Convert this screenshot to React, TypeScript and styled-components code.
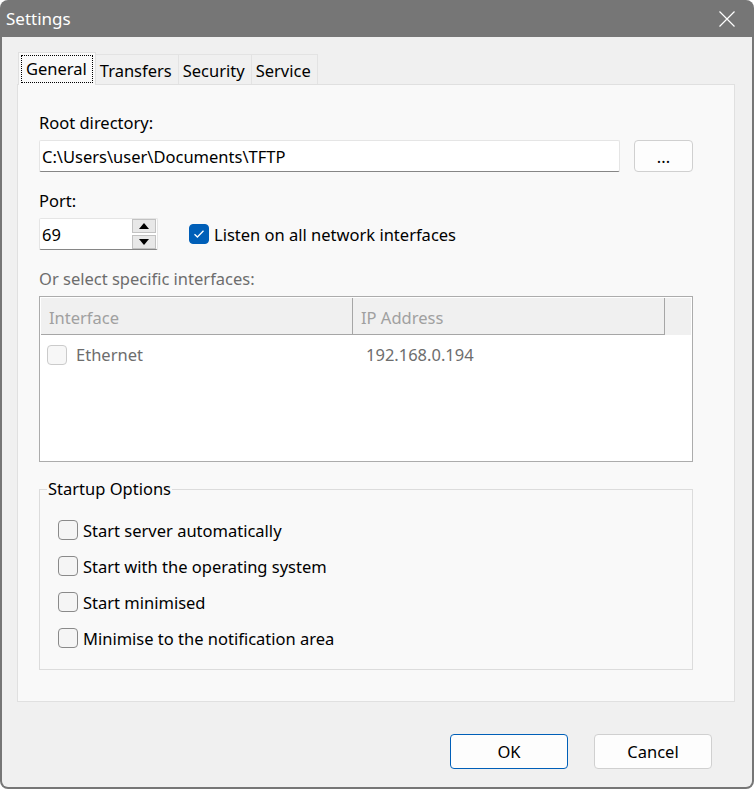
import React from "react";
import styled, { createGlobalStyle, css } from "styled-components";

const FONT = `"Noto Sans", "Open Sans", "DejaVu Sans", sans-serif`;
const SIZE = "16.5px";

const GlobalStyle = createGlobalStyle`
  html, body {
    margin: 0;
    padding: 0;
    background: #ffffff;
  }
  body {
    font-family: ${FONT};
    font-size: ${SIZE};
    color: #000;
  }
  * { box-sizing: border-box; }
`;

const Window = styled.div`
  width: 754px;
  height: 789px;
  background: #767676;
  border-radius: 8px;
  display: flex;
  flex-direction: column;
  overflow: hidden;
`;

const TitleBar = styled.div`
  height: 37px;
  flex: none;
  display: flex;
  align-items: center;
  justify-content: space-between;
  padding: 0 19px 0 6px;
  color: #ffffff;
  font-size: 17px;
  line-height: 24px;
`;

const Client = styled.div`
  flex: 1;
  margin: 0 2px 2px;
  background: #f0f0f0;
  border-radius: 0 0 6px 6px;
  padding: 15px 17px 0 15px;
  display: flex;
  flex-direction: column;
`;

const TabStrip = styled.div`
  height: 32px;
  display: flex;
  align-items: flex-end;
  padding-left: 1px;
`;

const Tab = styled.div<{ $active?: boolean }>`
  position: relative;
  height: 30px;
  padding: 2px 2px 0;
  margin-left: -1px;
  border: 1px solid #e3e3e3;
  border-bottom: none;
  background: #f0f0f0;
  display: flex;
  align-items: flex-start;
  &:first-child { margin-left: 0; }
  ${(p) =>
    p.$active &&
    css`
      height: 33px;
      margin-bottom: -1px;
      background: #f9f9f9;
      border-color: #e0e0e0;
      z-index: 1;
    `}
`;

const TabLabel = styled.span<{ $focused?: boolean }>`
  height: 28px;
  padding: ${(p) => (p.$focused ? "0 5px 0 4px" : "0 3px 0 1px")};
  line-height: 26px;
  border: 1px dotted ${(p) => (p.$focused ? "#000" : "transparent")};
  white-space: nowrap;
`;

const Panel = styled.div`
  height: 618px;
  border: 1px solid #e0e0e0;
  background: #f9f9f9;
  padding: 26px 0 0 21px;
  display: flex;
  flex-direction: column;
`;

const Content = styled.div`
  width: 654px;
  display: flex;
  flex-direction: column;
`;

const Label = styled.div<{ $muted?: boolean; $gap?: number }>`
  line-height: 24px;
  height: 24px;
  margin-top: ${(p) => p.$gap ?? 0}px;
  margin-bottom: 5px;
  color: ${(p) => (p.$muted ? "#6d6d6d" : "#000")};
  white-space: nowrap;
`;

const Row = styled.div<{ $gap: number }>`
  display: flex;
  align-items: center;
  gap: ${(p) => p.$gap}px;
`;

const TextBox = styled.div<{ $width: number }>`
  width: ${(p) => p.$width}px;
  height: 32px;
  background: #ffffff;
  border: 1px solid #e5e5e5;
  border-bottom-color: #868686;
  border-radius: 2px;
  display: flex;
  align-items: stretch;
`;

const TextValue = styled.div`
  flex: 1;
  padding: 1px 0 0 2px;
  line-height: 30px;
  white-space: nowrap;
`;

const PushButton = styled.button<{ $default?: boolean; $width: number; $height: number }>`
  width: ${(p) => p.$width}px;
  height: ${(p) => p.$height}px;
  font-family: ${FONT};
  font-size: ${SIZE};
  color: #000;
  background: #fdfdfd;
  border: 1px solid ${(p) => (p.$default ? "#005fb8" : "#d0d0d0")};
  border-radius: 4px;
  padding: 0;
  display: flex;
  align-items: center;
  justify-content: center;
`;

const SpinButtons = styled.div`
  width: 25px;
  display: flex;
  flex-direction: column;
  justify-content: center;
  gap: 2px;
`;

const SpinButton = styled.div`
  width: 24px;
  height: 14px;
  background: #e8e8e8;
  border: 1px solid #c2c2c2;
  display: flex;
  align-items: center;
  justify-content: center;
`;

const CheckBox = styled.span<{ $checked?: boolean; $disabled?: boolean }>`
  flex: none;
  width: 20px;
  height: 20px;
  border-radius: 4px;
  display: inline-flex;
  align-items: center;
  justify-content: center;
  ${(p) =>
    p.$checked
      ? css`
          background: #005fb8;
          border: 1px solid #005fb8;
        `
      : p.$disabled
      ? css`
          background: #f7f7f7;
          border: 1px solid #cbcbcb;
        `
      : css`
          background: #f5f5f5;
          border: 1px solid #8a8a8a;
        `}
`;

const CheckRow = styled.label<{ $height?: number }>`
  display: flex;
  align-items: center;
  gap: 5px;
  height: ${(p) => p.$height ?? 36}px;
  line-height: 24px;
  white-space: nowrap;
`;

const CheckText = styled.span`
  padding-top: 2px;
`;

const ListView = styled.div`
  height: 166px;
  border: 1px solid #acacac;
  background: #ffffff;
  padding: 1px;
  display: flex;
  flex-direction: column;
`;

const HeaderRow = styled.div`
  height: 37px;
  background: #f0f0f0;
  display: flex;
`;

const HeaderCell = styled.div`
  width: 312px;
  height: 37px;
  padding: 2px 0 0 8px;
  line-height: 36px;
  color: #a0a0a0;
  border-right: 1px solid #a6a6a6;
  border-bottom: 1px solid #a6a6a6;
  white-space: nowrap;
`;

const ListRow = styled.div`
  height: 38px;
  padding-top: 2px;
  display: flex;
  align-items: center;
  color: #6d6d6d;
  line-height: 24px;
`;

const ListCell = styled.div<{ $width?: number; $pad: number }>`
  width: ${(p) => (p.$width ? `${p.$width}px` : "auto")};
  padding-left: ${(p) => p.$pad}px;
  display: flex;
  align-items: center;
  gap: 9px;
  white-space: nowrap;
`;

const GroupBox = styled.fieldset`
  margin: 15px 0 0;
  padding: 11px 0 13px 18px;
  min-width: 0;
  border: 1px solid #dcdcdc;
`;

const Legend = styled.legend`
  margin-left: -11px;
  padding: 0 1px;
  line-height: 24px;
  white-space: nowrap;
`;

const ButtonBar = styled.div`
  display: flex;
  justify-content: flex-end;
  gap: 26px;
  padding: 32px 23px 0 0;
`;

const CloseIcon = () => (
  <svg width="16" height="16" viewBox="0 0 16 16" aria-hidden="true">
    <path d="M0.5 0.5 L15.5 15.5 M15.5 0.5 L0.5 15.5" stroke="#ffffff" strokeWidth="1.2" fill="none" />
  </svg>
);

const Arrow = ({ up }: { up?: boolean }) => (
  <svg width="10" height="6" viewBox="0 0 10 6" aria-hidden="true">
    <path d={up ? "M0 6 L5 0 L10 6 Z" : "M0 0 L5 6 L10 0 Z"} fill="#000" />
  </svg>
);

const Check = () => (
  <svg width="12" height="10" viewBox="0 0 12 10" aria-hidden="true">
    <path d="M1.5 5.2 L4.4 8 L10.5 1.8" stroke="#ffffff" strokeWidth="1.3" fill="none" />
  </svg>
);

const tabs = ["General", "Transfers", "Security", "Service"];

const startup = [
  "Start server automatically",
  "Start with the operating system",
  "Start minimised",
  "Minimise to the notification area",
];

export default function App() {
  return (
    <>
      <GlobalStyle />
      <Window>
        <TitleBar>
          <span>Settings</span>
          <CloseIcon />
        </TitleBar>
        <Client>
          <TabStrip>
            {tabs.map((t, i) => (
              <Tab key={t} $active={i === 0}>
                <TabLabel $focused={i === 0}>{t}</TabLabel>
              </Tab>
            ))}
          </TabStrip>
          <Panel>
            <Content>
              <Label>Root directory:</Label>
              <Row $gap={14}>
                <TextBox $width={581}>
                  <TextValue>C:\Users\user\Documents\TFTP</TextValue>
                </TextBox>
                <PushButton $width={59} $height={32}>...</PushButton>
              </Row>

              <Label $gap={17}>Port:</Label>
              <Row $gap={31}>
                <TextBox $width={119}>
                  <TextValue>69</TextValue>
                  <SpinButtons>
                    <SpinButton>
                      <Arrow up />
                    </SpinButton>
                    <SpinButton>
                      <Arrow />
                    </SpinButton>
                  </SpinButtons>
                </TextBox>
                <CheckRow $height={32}>
                  <CheckBox $checked>
                    <Check />
                  </CheckBox>
                  <CheckText>Listen on all network interfaces</CheckText>
                </CheckRow>
              </Row>

              <Label $gap={17} $muted>
                Or select specific interfaces:
              </Label>
              <ListView>
                <HeaderRow>
                  <HeaderCell>Interface</HeaderCell>
                  <HeaderCell>IP Address</HeaderCell>
                </HeaderRow>
                <ListRow>
                  <ListCell $width={312} $pad={6}>
                    <CheckBox $disabled />
                    Ethernet
                  </ListCell>
                  <ListCell $pad={13}>192.168.0.194</ListCell>
                </ListRow>
              </ListView>

              <GroupBox>
                <Legend>Startup Options</Legend>
                {startup.map((s) => (
                  <CheckRow key={s}>
                    <CheckBox />
                    <CheckText>{s}</CheckText>
                  </CheckRow>
                ))}
              </GroupBox>
            </Content>
          </Panel>
          <ButtonBar>
            <PushButton $default $width={118} $height={35}>
              OK
            </PushButton>
            <PushButton $width={118} $height={35}>
              Cancel
            </PushButton>
          </ButtonBar>
        </Client>
      </Window>
    </>
  );
}
